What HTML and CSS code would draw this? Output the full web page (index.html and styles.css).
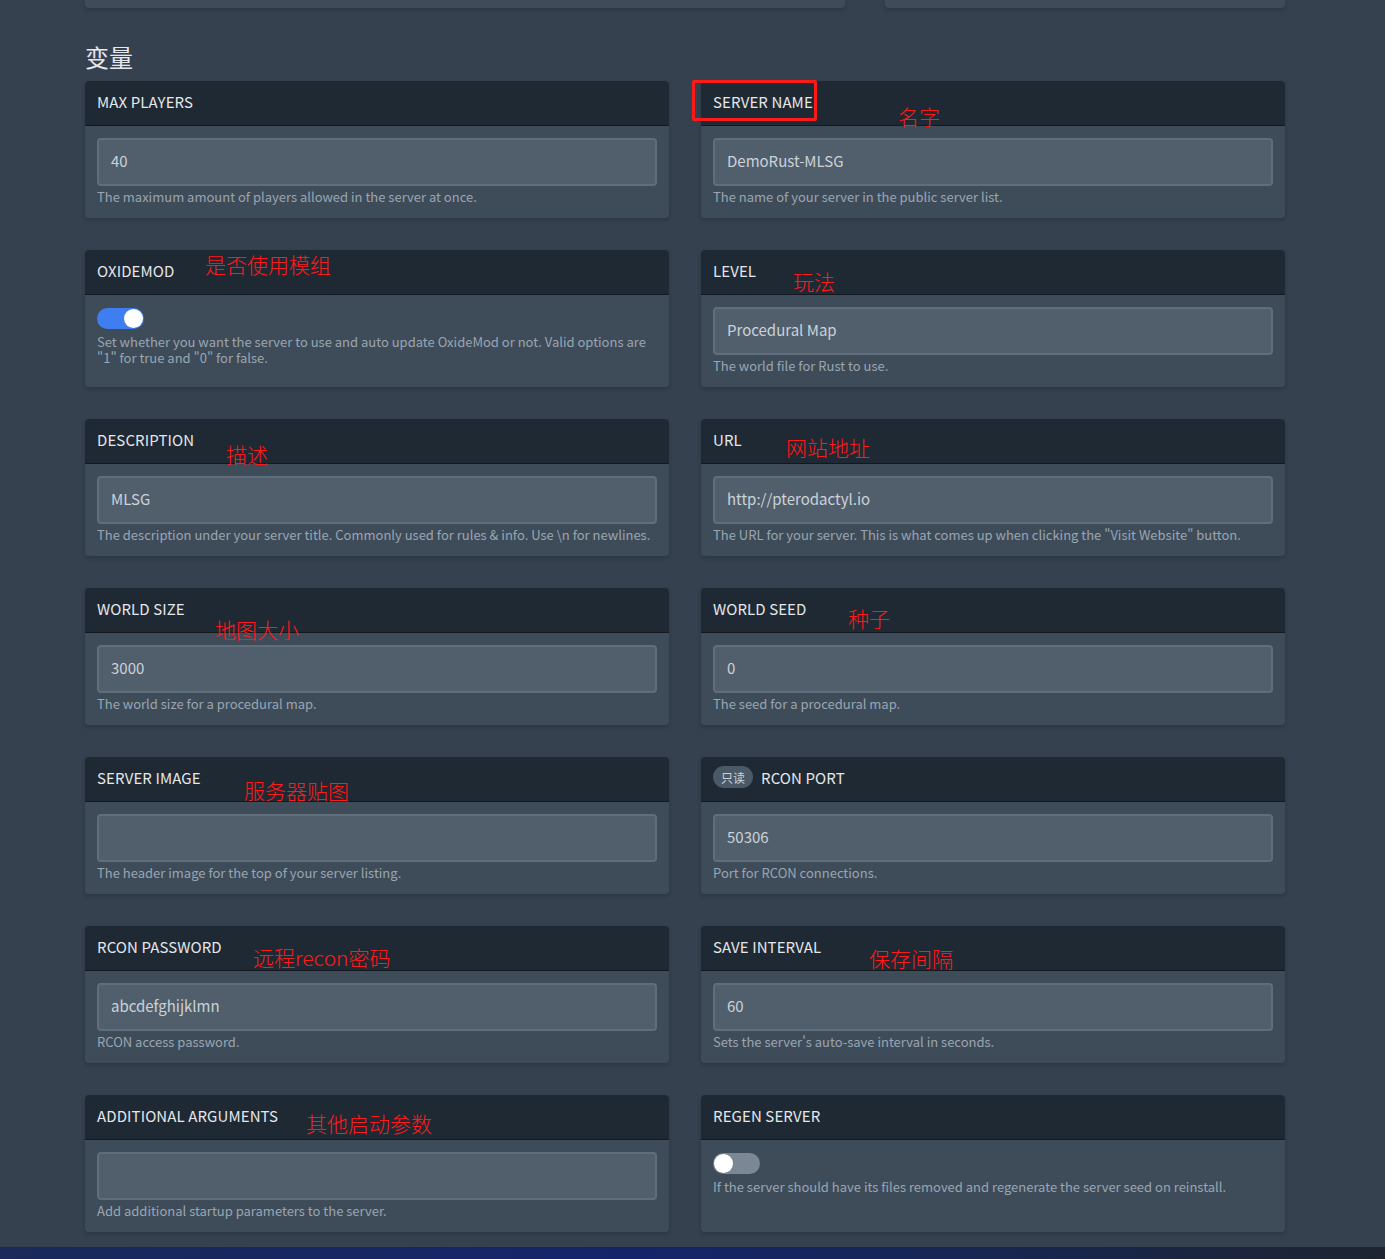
FILE: index.html
```html
<!DOCTYPE html>
<html lang="zh-CN">
<head>
<meta charset="utf-8">
<title>变量</title>
<link rel="stylesheet" href="styles.css">
</head>
<body>
<div class="page">
  <div class="top-row">
    <div class="stub stub-wide"></div>
    <div class="stub stub-narrow"></div>
  </div>
  <h2 class="section-title">变量</h2>
  <div class="grid">
    <div class="card">
      <div class="card-head">MAX PLAYERS</div>
      <div class="card-body">
        <div class="input">40</div>
        <p class="help">The maximum amount of players allowed in the server at once.</p>
      </div>
    </div>
    <div class="card">
      <div class="card-head">SERVER NAME</div>
      <div class="card-body">
        <div class="input">DemoRust-MLSG</div>
        <p class="help">The name of your server in the public server list.</p>
      </div>
    </div>

    <div class="card">
      <div class="card-head">OXIDEMOD</div>
      <div class="card-body">
        <div class="toggle on"><span class="knob"></span></div>
        <p class="help">Set whether you want the server to use and auto update OxideMod or not. Valid options are "1" for true and "0" for false.</p>
      </div>
    </div>
    <div class="card">
      <div class="card-head">LEVEL</div>
      <div class="card-body">
        <div class="input">Procedural Map</div>
        <p class="help">The world file for Rust to use.</p>
      </div>
    </div>

    <div class="card">
      <div class="card-head">DESCRIPTION</div>
      <div class="card-body">
        <div class="input">MLSG</div>
        <p class="help">The description under your server title. Commonly used for rules &amp; info. Use \n for newlines.</p>
      </div>
    </div>
    <div class="card">
      <div class="card-head">URL</div>
      <div class="card-body">
        <div class="input">http://pterodactyl.io</div>
        <p class="help">The URL for your server. This is what comes up when clicking the "Visit Website" button.</p>
      </div>
    </div>

    <div class="card">
      <div class="card-head">WORLD SIZE</div>
      <div class="card-body">
        <div class="input">3000</div>
        <p class="help">The world size for a procedural map.</p>
      </div>
    </div>
    <div class="card">
      <div class="card-head">WORLD SEED</div>
      <div class="card-body">
        <div class="input">0</div>
        <p class="help">The seed for a procedural map.</p>
      </div>
    </div>

    <div class="card">
      <div class="card-head">SERVER IMAGE</div>
      <div class="card-body">
        <div class="input"></div>
        <p class="help">The header image for the top of your server listing.</p>
      </div>
    </div>
    <div class="card">
      <div class="card-head"><span class="badge">只读</span>RCON PORT</div>
      <div class="card-body">
        <div class="input">50306</div>
        <p class="help">Port for RCON connections.</p>
      </div>
    </div>

    <div class="card">
      <div class="card-head">RCON PASSWORD</div>
      <div class="card-body">
        <div class="input">abcdefghijklmn</div>
        <p class="help">RCON access password.</p>
      </div>
    </div>
    <div class="card">
      <div class="card-head">SAVE INTERVAL</div>
      <div class="card-body">
        <div class="input">60</div>
        <p class="help">Sets the server's auto-save interval in seconds.</p>
      </div>
    </div>

    <div class="card">
      <div class="card-head">ADDITIONAL ARGUMENTS</div>
      <div class="card-body">
        <div class="input"></div>
        <p class="help">Add additional startup parameters to the server.</p>
      </div>
    </div>
    <div class="card">
      <div class="card-head">REGEN SERVER</div>
      <div class="card-body">
        <div class="toggle"><span class="knob"></span></div>
        <p class="help">If the server should have its files removed and regenerate the server seed on reinstall.</p>
      </div>
    </div>
  </div>

  <div class="annot-box"></div>
  <span class="annot a1">名字</span>
  <span class="annot a2">是否使用模组</span>
  <span class="annot a3">玩法</span>
  <span class="annot a4">描述</span>
  <span class="annot a5">网站地址</span>
  <span class="annot a6">地图大小</span>
  <span class="annot a7">种子</span>
  <span class="annot a8">服务器贴图</span>
  <span class="annot a9">远程recon密码</span>
  <span class="annot a10">保存间隔</span>
  <span class="annot a11">其他启动参数</span>
</div>
<div class="taskbar"></div>
</body>
</html>
```

FILE: styles.css
```css
html, body {
  margin: 0;
  padding: 0;
}
body {
  background: #35414f;
  font-family: "Noto Sans CJK SC", "Noto Sans", sans-serif;
  color: #e4e7eb;
}
.page {
  position: relative;
  width: 1200px;
  margin-left: 85px;
  padding-bottom: 15px;
}
.top-row {
  display: flex;
  gap: 40px;
}
.stub {
  height: 8px;
  background: #3e4c5a;
  border-radius: 0 0 4px 4px;
  box-shadow: 0 2px 4px rgba(0, 0, 0, 0.18);
}
.stub-wide { width: 760px; }
.stub-narrow { width: 400px; }
.section-title {
  margin: 33px 0 8px;
  font-size: 24px;
  line-height: 32px;
  font-weight: 400;
  color: #e4e7eb;
}
.grid {
  display: grid;
  grid-template-columns: 584px 584px;
  column-gap: 32px;
  row-gap: 32px;
  grid-auto-rows: 137px;
}
.card {
  background: #3e4c5a;
  border-radius: 4px;
  overflow: hidden;
  box-shadow: 0 2px 4px rgba(0, 0, 0, 0.18);
  display: flex;
  flex-direction: column;
}
.card-head {
  height: 45px;
  box-sizing: border-box;
  background: #1f2933;
  border-bottom: 1px solid #12181e;
  padding: 0 12px 4px;
  display: flex;
  align-items: center;
  font-size: 15px;
  font-weight: 400;
  color: #e4e7eb;
  letter-spacing: 0.1px;
}
.card-body {
  padding: 12px 12px 0;
}
.input {
  height: 48px;
  box-sizing: border-box;
  background: #515f6c;
  border: 2px solid #606d7b;
  border-radius: 4px;
  padding: 0 12px 3px;
  display: flex;
  align-items: center;
  font-size: 15px;
  color: #cbd2d9;
}
.help {
  margin: 3px 0 0;
  font-size: 13px;
  line-height: 16px;
  color: #9aa5b1;
}
.toggle {
  position: relative;
  width: 47px;
  height: 21px;
  border-radius: 11px;
  background: #7b8794;
  margin-top: 1px;
  margin-bottom: 5px;
}
.toggle .knob {
  position: absolute;
  top: 1px;
  left: 1px;
  width: 19px;
  height: 19px;
  border-radius: 50%;
  background: #ffffff;
}
.toggle.on {
  background: #3f7ef0;
}
.toggle.on .knob {
  left: 27px;
}
.badge {
  display: inline-flex;
  align-items: center;
  justify-content: center;
  width: 40px;
  height: 22px;
  border-radius: 11px;
  background: #4b5866;
  color: #cbd2d9;
  font-size: 12px;
  margin-right: 8px;
}
.annot {
  position: absolute;
  color: #ff1a1a;
  font-size: 21px;
  line-height: 22px;
  font-weight: 300;
  white-space: nowrap;
}
.annot-box {
  position: absolute;
  left: 607px;
  top: 80px;
  width: 119px;
  height: 35px;
  border: 3px solid #ff1a1a;
  border-radius: 2px;
}
.a1 { left: 813px; top: 105px; }
.a2 { left: 120px; top: 253px; }
.a3 { left: 708px; top: 270px; }
.a4 { left: 141px; top: 443px; }
.a5 { left: 701px; top: 436px; }
.a6 { left: 130px; top: 618px; }
.a7 { left: 763px; top: 607px; }
.a8 { left: 159px; top: 779px; }
.a9 { left: 168px; top: 946px; }
.a10 { left: 784px; top: 947px; }
.a11 { left: 221px; top: 1112px; }
.taskbar {
  height: 13px;
  background: linear-gradient(90deg, #1b2a5a 0%, #14246a 45%, #18264e 75%, #1e2430 100%);
}
```
